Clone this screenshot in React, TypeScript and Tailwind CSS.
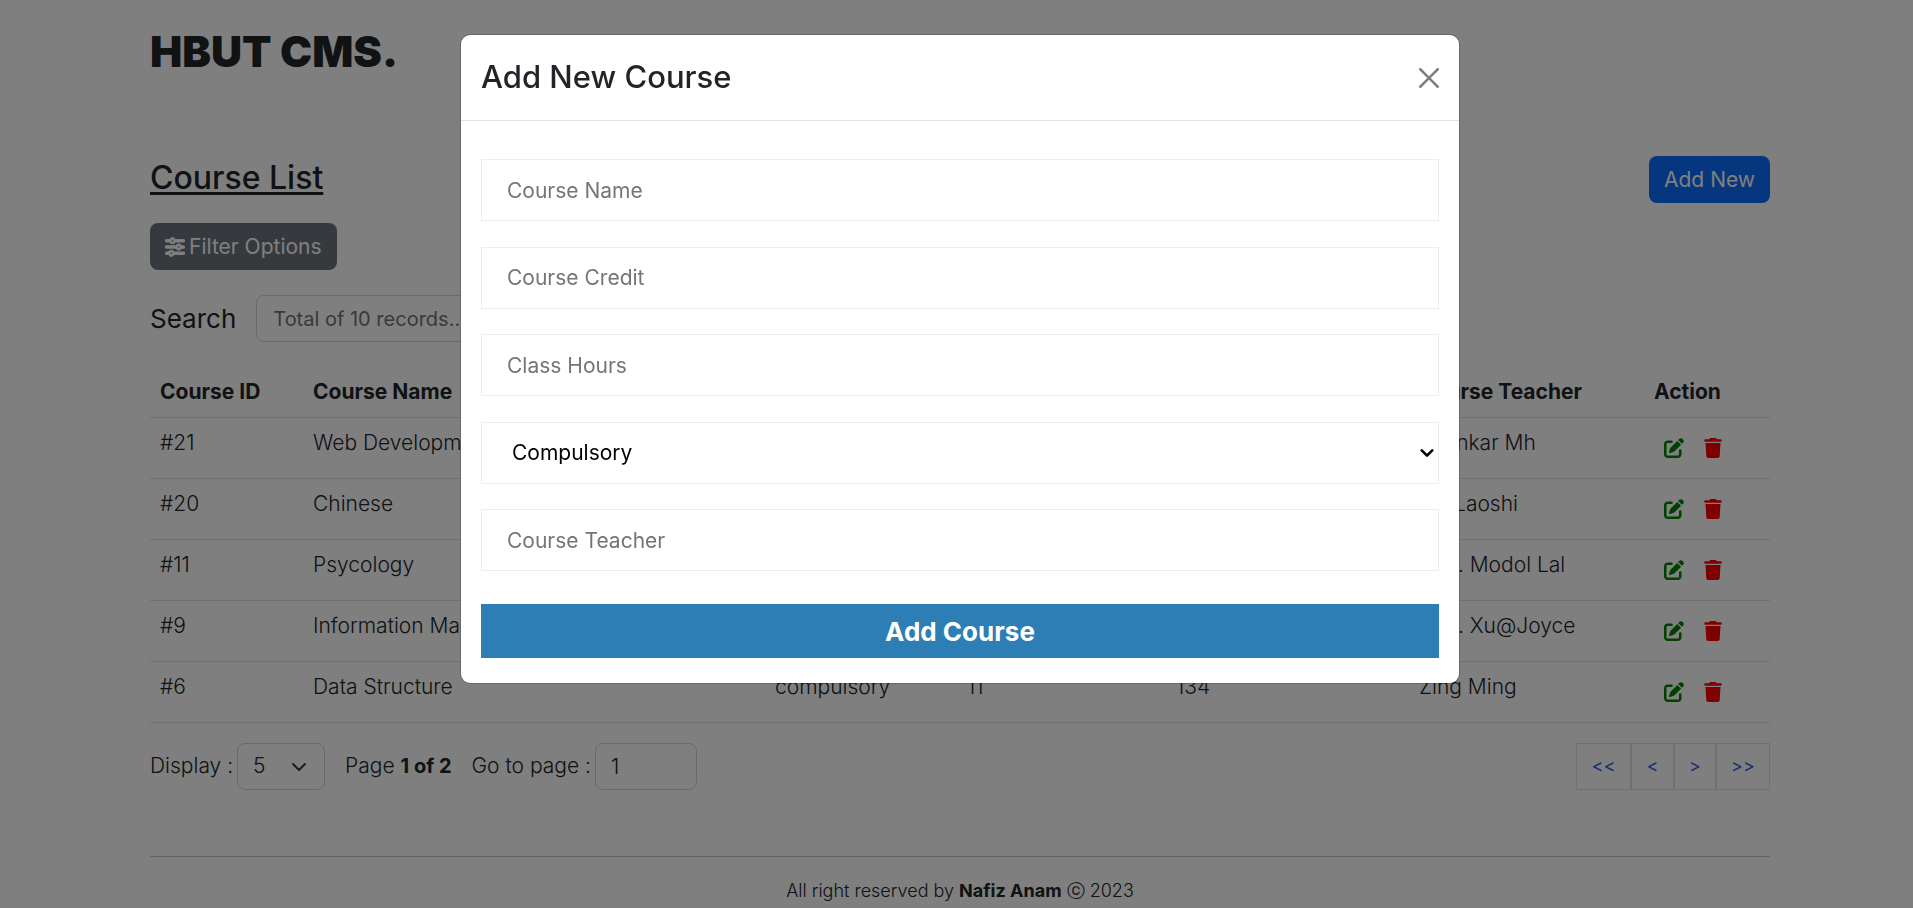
import { FaPenToSquare, FaSliders, FaTrash } from "react-icons/fa6";

type Course = { id: number; name: string; type: string; credit: string; hours: string; teacher: string };

const courses: Course[] = [
  { id: 21, name: "Web Development", type: "compulsory", credit: "11", hours: "64", teacher: "Shankar Mh" },
  { id: 20, name: "Chinese", type: "compulsory", credit: "8", hours: "64", teacher: "Liu Laoshi" },
  { id: 11, name: "Psycology", type: "optional", credit: "4", hours: "32", teacher: "Prof. Modol Lal" },
  { id: 9, name: "Information Management", type: "compulsory", credit: "6", hours: "48", teacher: "Prof. Xu@Joyce" },
  { id: 6, name: "Data Structure", type: "compulsory", credit: "11", hours: "134", teacher: "Zing Ming" },
];

const fieldClass =
  "block h-[62px] w-full border border-[#eeeeee] bg-white px-[25px] text-[21px] font-normal text-black outline-none placeholder:text-[#757575]";

function Chevron({ className, color, weight }: { className: string; color: string; weight: number }) {
  return (
    <svg
      viewBox="0 0 16 16"
      className={className}
      fill="none"
      stroke={color}
      strokeWidth={weight}
      strokeLinecap="round"
      strokeLinejoin="round"
    >
      <path d="m2 5 6 6 6-6" />
    </svg>
  );
}

function CourseTable() {
  return (
    <table className="mt-[25px] w-full table-fixed border-collapse text-left text-[21px] leading-[30px]">
      <colgroup>
        <col className="w-[153px]" />
        <col className="w-[462px]" />
        <col className="w-[192px]" />
        <col className="w-[209px]" />
        <col className="w-[243px]" />
        <col className="w-[235px]" />
        <col />
      </colgroup>
      <thead>
        <tr className="h-[50px] border-b border-[#dee2e6] align-bottom font-bold">
          <th className="px-[10px] pb-[10px]">Course ID</th>
          <th className="px-[10px] pb-[10px]">Course Name</th>
          <th className="px-[10px] pb-[10px]">Course Type</th>
          <th className="px-[10px] pb-[10px]">Credit</th>
          <th className="px-[10px] pb-[10px]">Class Hours</th>
          <th className="px-[10px] pb-[10px]">Course Teacher</th>
          <th className="px-[10px] pb-[10px]">Action</th>
        </tr>
      </thead>
      <tbody>
        {courses.map((c) => (
          <tr key={c.id} className="h-[61px] border-b border-[#dee2e6] align-top">
            <td className="px-[10px] pt-[10px]">#{c.id}</td>
            <td className="px-[10px] pt-[10px]">{c.name}</td>
            <td className="px-[10px] pt-[10px]">{c.type}</td>
            <td className="px-[10px] pt-[10px]">{c.credit}</td>
            <td className="px-[10px] pt-[10px]">{c.hours}</td>
            <td className="px-[10px] pt-[10px]">{c.teacher}</td>
            <td className="px-[10px] pt-5">
              <div className="flex gap-5 pl-[10px]">
                <button type="button" aria-label={`Edit course ${c.id}`} className="text-[#008000]">
                  <FaPenToSquare className="size-5" />
                </button>
                <button type="button" aria-label={`Delete course ${c.id}`} className="text-[#ff0000]">
                  <FaTrash className="h-5 w-[18px]" />
                </button>
              </div>
            </td>
          </tr>
        ))}
      </tbody>
    </table>
  );
}

function Pagination() {
  const button = "h-[47px] border border-[#dee2e6] text-lg font-normal text-[#2563eb]";
  return (
    <div className="mt-5 flex items-center justify-between text-[21px]">
      <div className="flex items-center gap-5">
        <div className="flex items-center gap-1">
          <label htmlFor="page-size">Display :</label>
          <div className="relative">
            <select
              id="page-size"
              defaultValue="5"
              className="h-[47px] w-[88px] appearance-none rounded-lg border border-[#ced4da] bg-white pl-[15px]"
            >
              <option>5</option>
              <option>10</option>
            </select>
            <Chevron className="pointer-events-none absolute top-4 right-[18px] size-4" color="#343a40" weight={2} />
          </div>
        </div>
        <span>
          Page <strong className="text-xl font-bold">1 of 2</strong>
        </span>
        <div className="flex items-center gap-1">
          <label htmlFor="go-to">Go to page :</label>
          <input
            id="go-to"
            defaultValue="1"
            className="h-[47px] w-[102px] rounded-lg border border-[#ced4da] bg-white px-[15px]"
          />
        </div>
      </div>
      <div className="flex">
        <button type="button" className={`${button} w-[55px]`}>{"<<"}</button>
        <button type="button" className={`${button} w-[43px]`}>{"<"}</button>
        <button type="button" className={`${button} w-[42px]`}>{">"}</button>
        <button type="button" className={`${button} w-[54px]`}>{">>"}</button>
      </div>
    </div>
  );
}

function AddCourseDialog() {
  return (
    <div className="fixed inset-0 flex items-start justify-center bg-black/50 pt-[34px] pl-[7px]">
      <div
        role="dialog"
        aria-labelledby="dialog-title"
        className="w-full max-w-[1000px] rounded-[10px] border border-black/18 bg-white bg-clip-padding"
      >
        <div className="flex h-[86px] items-center justify-between border-b border-[#dee2e6] px-5">
          <h4 id="dialog-title" className="text-[31px] font-medium">
            Add New Course
          </h4>
          <button type="button" aria-label="Close">
            <svg viewBox="0 0 16 16" className="size-5 opacity-50" fill="#000">
              <path d="M.293.293a1 1 0 0 1 1.414 0L8 6.586 14.293.293a1 1 0 1 1 1.414 1.414L9.414 8l6.293 6.293a1 1 0 0 1-1.414 1.414L8 9.414l-6.293 6.293a1 1 0 0 1-1.414-1.414L6.586 8 .293 1.707a1 1 0 0 1 0-1.414z" />
            </svg>
          </button>
        </div>
        <form className="px-5 pt-[38px] pb-[25px]">
          <div className="flex h-[412px] flex-col justify-between">
            <input aria-label="Course Name" placeholder="Course Name" className={fieldClass} />
            <input aria-label="Course Credit" placeholder="Course Credit" className={fieldClass} />
            <input aria-label="Class Hours" placeholder="Class Hours" className={fieldClass} />
            <div className="relative">
              <select
                aria-label="Course Type"
                className="block h-[62px] w-full appearance-none border border-[#eeeeee] bg-white pl-[30px] text-[21px] font-normal text-black"
              >
                <option>Compulsory</option>
                <option>Optional</option>
              </select>
              <Chevron
                className="pointer-events-none absolute top-6 right-[5px] size-[14px]"
                color="#000000"
                weight={3}
              />
            </div>
            <input aria-label="Course Teacher" placeholder="Course Teacher" className={fieldClass} />
          </div>
          <button type="button" className="mt-[33px] h-[54px] w-full bg-[#2e7eb6] text-[26px] font-bold text-white">
            Add Course
          </button>
        </form>
      </div>
    </div>
  );
}

export default function App() {
  return (
    <div className="h-screen overflow-hidden bg-white pl-[7px] font-['Inter',sans-serif] font-light text-[#212529]">
      <div className="mx-auto max-w-[1650px] px-[15px]">
        <header className="pt-5">
          <div className="text-[43px] leading-[62px] font-black">HBUT CMS.</div>
        </header>
        <main className="pt-[74px]">
          <div className="flex items-start justify-between">
            <h3 className="text-[32px] leading-[44px] font-medium underline decoration-[3px] underline-offset-[3px]">
              Course List
            </h3>
            <button
              type="button"
              className="h-[47px] rounded-lg bg-[#0d6efd] px-[15px] text-[21px] font-normal text-white"
            >
              Add New
            </button>
          </div>
          <button
            type="button"
            className="mt-5 flex h-[47px] items-center gap-1 rounded-lg bg-[#6c757d] px-[15px] text-[21px] font-normal text-white"
          >
            <FaSliders className="size-5" stroke="currentColor" strokeWidth={24} />
            Filter Options
          </button>
          <div className="mt-[25px] flex items-center gap-5">
            <label htmlFor="search" className="text-[26px] font-normal">
              Search
            </label>
            <input
              id="search"
              placeholder="Total of 10 records..."
              className="h-[47px] w-[400px] rounded-lg border border-[#ced4da] px-4 text-xl font-normal placeholder:text-[#6c757d]"
            />
          </div>
          <CourseTable />
          <Pagination />
        </main>
        <footer className="mt-[66px] border-t border-[#c8c9ca] pt-[20px] text-center text-lg leading-7">
          All right reserved by <strong className="font-bold">Nafiz Anam</strong> ⓒ 2023
        </footer>
      </div>
      <AddCourseDialog />
    </div>
  );
}
